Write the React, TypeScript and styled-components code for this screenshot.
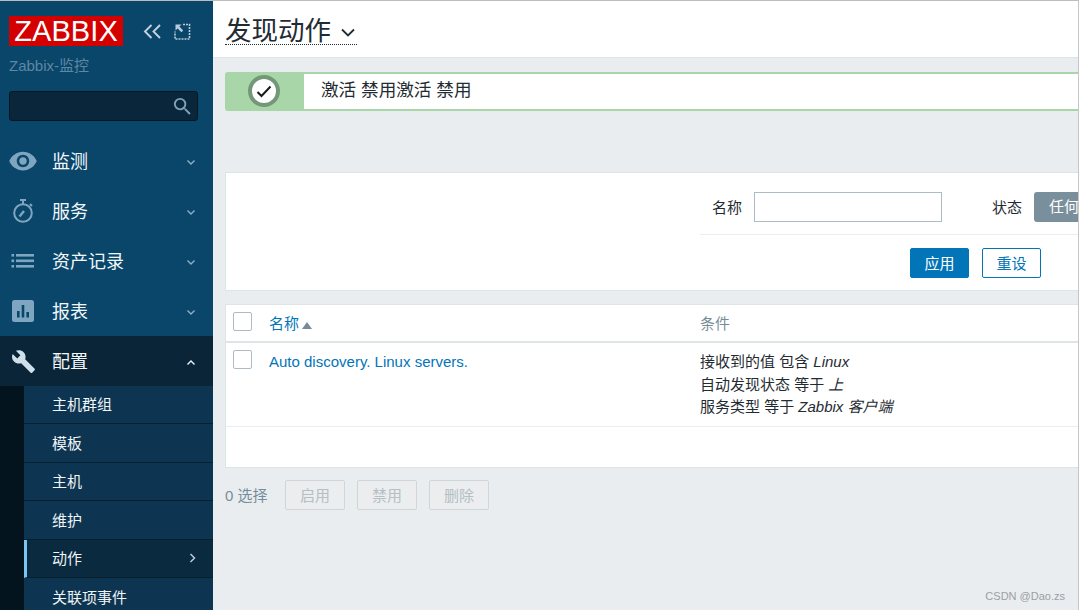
import React from "react";
import styled, { createGlobalStyle } from "styled-components";
import { MdBuild, MdSearch, MdVisibility } from "react-icons/md";

const GlobalStyle = createGlobalStyle`
  html, body {
    margin: 0;
    padding: 0;
    background: #fff;
  }
  body {
    font-family: "Liberation Sans", "Noto Sans CJK SC", sans-serif;
  }
  * {
    box-sizing: border-box;
  }
`;

const Page = styled.div`
  position: relative;
  display: flex;
  width: 1079px;
  height: 610px;
  overflow: hidden;
  border-top: 1px solid #bdbdbd;
  border-right: 1px solid #c4c6c8;
`;

const Sidebar = styled.aside`
  flex: 0 0 213px;
  display: flex;
  flex-direction: column;
  background: #0a466a;
`;

const LogoRow = styled.div`
  display: flex;
  flex: none;
  align-items: center;
  padding: 15px 0 0 9px;
  height: 45px;
`;

const Logo = styled.div`
  width: 114px;
  height: 30px;
  background: #d40000;
  color: #fff;
  font-size: 29px;
  line-height: 30px;
  text-align: center;
  letter-spacing: 0.1px;
`;

const LogoIcons = styled.div`
  display: flex;
  align-items: center;
  gap: 12px;
  margin-left: 20px;
`;

const HostName = styled.div`
  flex: none;
  margin: 11px 0 0 9px;
  font-size: 15px;
  line-height: 18px;
  color: #5d88a4;
`;

const SearchBox = styled.div`
  display: flex;
  flex: none;
  align-items: center;
  justify-content: flex-end;
  width: 189px;
  height: 30px;
  margin: 16px 0 15px 9px;
  padding-right: 3px;
  background: #09263a;
  border: 1px solid #041824;
  border-radius: 3px;
  color: #7fa2b8;
  font-size: 23px;
`;

const TopItem = styled.div<{ $open?: boolean }>`
  display: flex;
  align-items: center;
  height: 50px;
  flex: none;
  background: ${(p) => (p.$open ? "#0a2537" : "transparent")};
  color: #f2f7fa;
  font-size: 18px;
`;

const IconSlot = styled.span<{ $open?: boolean }>`
  display: flex;
  align-items: center;
  justify-content: center;
  flex: 0 0 46px;
  color: ${(p) => (p.$open ? "#cfe0ea" : "#7fa6c0")};
`;

const ItemLabel = styled.span`
  flex: 1;
  margin-left: 6px;
  padding-bottom: 2px;
`;

const ItemArrow = styled.svg`
  margin: 2px 17px 0 0;
`;

const SubNav = styled.div`
  flex: 1;
  border-left: 24px solid #04141e;
  background: #0d3450;
`;

const SubItem = styled.div<{ $active?: boolean; $h: number }>`
  display: flex;
  align-items: center;
  justify-content: space-between;
  height: ${(p) => p.$h}px;
  padding-left: ${(p) => (p.$active ? 25 : 28)}px;
  padding-right: 17px;
  padding-bottom: 2px;
  border-bottom: 1px solid #06202f;
  border-left: ${(p) => (p.$active ? "3px solid #7bc5f5" : "none")};
  background: ${(p) => (p.$active ? "#0a2a40" : "transparent")};
  color: #f0f5f8;
  font-size: 15px;
`;

const Main = styled.main`
  flex: 1;
  min-width: 0;
  display: flex;
  flex-direction: column;
  background: #e9edf0;
  overflow: hidden;
`;

const Header = styled.header`
  height: 57px;
  flex: none;
  padding: 13px 0 0 12px;
  background: #fff;
  border-bottom: 1px solid #dfe4e7;
`;

const PageTitle = styled.h1`
  display: inline-flex;
  align-items: center;
  gap: 10px;
  margin: 0;
  height: 31px;
  padding: 3px 2px 0 0;
  font-size: 26.5px;
  line-height: 28px;
  font-weight: 400;
  color: #1f2c33;
  border-bottom: 1px dotted #1f2c33;
`;

const Message = styled.div`
  display: flex;
  flex: none;
  height: 39px;
  margin: 14px 0 0 12px;
  border: 2px solid #a8d6a8;
  border-right: none;
  border-radius: 3px 0 0 3px;
  background: #fff;
`;

const MessageIcon = styled.div`
  flex: 0 0 77px;
  display: flex;
  align-items: center;
  justify-content: center;
  padding: 0 3px 1px 0;
  background: #a8d6a8;
`;

const CheckRing = styled.div`
  display: flex;
  align-items: center;
  justify-content: center;
  width: 32px;
  height: 32px;
  border: 4px solid #749777;
  border-radius: 50%;
  background: #fff;
`;

const MessageText = styled.div`
  padding-left: 17px;
  font-size: 17.6px;
  line-height: 32px;
  color: #1f2c33;
`;

const FilterCard = styled.section`
  display: flex;
  flex-direction: column;
  height: 119px;
  margin: 61px 0 0 12px;
  width: 900px;
  flex: none;
  padding: 19px 0 0 474px;
  background: #fff;
  border: 1px solid #dfe4e7;
`;

const FilterRow = styled.div`
  display: flex;
  align-items: center;
  height: 43px;
  padding: 0 0 12px 12px;
  border-bottom: 1px solid #ebeef0;
`;

const FieldLabel = styled.label`
  margin-top: -2px;
  font-size: 15px;
  color: #1f2c33;
`;

const TextInput = styled.div`
  width: 188px;
  height: 30px;
  margin: 0 50px 0 12px;
  border: 1px solid #acbbc4;
  background: #fff;
`;

const Segment = styled.div`
  width: 70px;
  height: 30px;
  margin-left: 12px;
  padding-left: 15px;
  border-radius: 3px 0 0 3px;
  background: #7a8f9c;
  color: #fff;
  font-size: 15px;
  line-height: 29px;
`;

const FilterActions = styled.div`
  display: flex;
  gap: 13px;
  padding: 13px 0 0 210px;
`;

const Button = styled.button<{ $primary?: boolean }>`
  width: 59px;
  height: 30px;
  padding: 0 0 2px;
  border: 1px solid #0275b8;
  border-radius: 2px;
  background: ${(p) => (p.$primary ? "#0275b8" : "#fff")};
  color: ${(p) => (p.$primary ? "#fff" : "#0275b8")};
  font-family: inherit;
  font-size: 15px;
`;

const TableCard = styled.section`
  width: 900px;
  height: 164px;
  flex: none;
  margin: 13px 0 0 12px;
  background: #fff;
  border: 1px solid #dfe4e7;
`;

const TableRow = styled.div<{ $head?: boolean }>`
  display: grid;
  grid-template-columns: 36px 431px 1fr;
  align-items: start;
  height: ${(p) => (p.$head ? 38 : 84)}px;
  padding: 7px 0 0 7px;
  border-bottom: ${(p) => (p.$head ? "2px solid #dfe4e7" : "1px solid #ebeef0")};
`;

const CheckBox = styled.span`
  display: block;
  width: 19px;
  height: 19px;
  border: 1px solid #acbbc4;
  border-radius: 2px;
  background: #fff;
`;

const NameLink = styled.a`
  padding-top: 2px;
  font-size: 15px;
  line-height: 20px;
  color: #0275b8;
`;

const SortMark = styled.span`
  display: inline-block;
  width: 0;
  height: 0;
  margin-left: 3px;
  border-left: 5px solid transparent;
  border-right: 5px solid transparent;
  border-bottom: 7px solid #768d99;
`;

const HeadCell = styled.div`
  padding-top: 2px;
  font-size: 15px;
  line-height: 20px;
  color: #768d99;
`;

const Conditions = styled.div`
  padding-top: 1px;
  font-size: 15px;
  line-height: 22.5px;
  color: #1f2c33;

  em {
    font-style: italic;
  }
`;

const Footer = styled.div`
  display: flex;
  align-items: center;
  gap: 12px;
  margin: 12px 0 0 12px;
  color: #768d99;
  font-size: 15px;
`;

const SelectedCount = styled.span`
  width: 48px;
  padding-bottom: 2px;
`;

const DisabledButton = styled.button`
  width: 60px;
  height: 30px;
  padding: 0 0 2px;
  border: 1px solid #cfd6da;
  border-radius: 2px;
  background: #ebedee;
  color: #b4bfc6;
  font-family: inherit;
  font-size: 15px;
`;

const Watermark = styled.div`
  position: absolute;
  right: 13px;
  bottom: 8px;
  font-size: 11px;
  color: #9a9fa3;
`;

const Chevron = ({ up }: { up?: boolean }) => (
  <ItemArrow width="10" height="7" viewBox="0 0 10 7" fill="none" stroke={up ? "#eef4f8" : "#8fb0c6"} strokeWidth="1.4">
    <path d={up ? "M1.5 5.5 5 2l3.5 3.5" : "M1.5 1.5 5 5l3.5-3.5"} />
  </ItemArrow>
);

const CollapseIcon = () => (
  <svg width="19" height="15" viewBox="0 0 19 15" fill="none" stroke="#c3d2dd" strokeWidth="1.9">
    <path d="M8.5 1 2 7.5 8.5 14M17 1 10.5 7.5 17 14" />
  </svg>
);

const ExpandIcon = () => (
  <svg width="17" height="17" viewBox="0 0 17 17" fill="none" stroke="#b9cbd8">
    <path d="M9 1.5h6.5V16H1V8.5" strokeWidth="1.6" strokeDasharray="2 1" />
    <path d="M1.5 1.5h6L5.4 3.6l3.8 3.8-1.8 1.8-3.8-3.8L1.5 7.5z" fill="#b9cbd8" stroke="none" />
  </svg>
);

const TimerIcon = () => (
  <svg width="24" height="26" viewBox="0 0 24 26" fill="none" stroke="#7fa6c0" strokeWidth="2">
    <circle cx="12" cy="15" r="8.8" />
    <path d="M9 2h6M12 2v4M19 6l2 2" />
    <path d="M8.5 18.5 13 13" strokeWidth="2.4" />
  </svg>
);

const ListIcon = () => (
  <svg width="24" height="16" viewBox="0 0 24 16" fill="#7fa6c0">
    <rect x="0.5" y="1" width="2.6" height="2.6" />
    <rect x="0.5" y="6.5" width="2.6" height="2.6" />
    <rect x="0.5" y="12" width="2.6" height="2.6" />
    <rect x="5" y="1" width="18" height="2.6" />
    <rect x="5" y="6.5" width="18" height="2.6" />
    <rect x="5" y="12" width="18" height="2.6" />
  </svg>
);

const ReportIcon = () => (
  <svg width="24" height="24" viewBox="0 0 24 24">
    <rect x="1" y="1" width="22" height="22" rx="2.5" fill="#7fa6c0" />
    <rect x="6" y="12" width="2.6" height="6.5" fill="#0a466a" />
    <rect x="10.7" y="6" width="2.6" height="12.5" fill="#0a466a" />
    <rect x="15.4" y="13" width="2.6" height="5.5" fill="#0a466a" />
  </svg>
);

const TitleArrow = () => (
  <svg width="14" height="9" viewBox="0 0 14 9" fill="none" stroke="#1f2c33" strokeWidth="1.8" style={{ marginTop: 3 }}>
    <path d="M1 1.5 7 7.5l6-6" />
  </svg>
);

const CheckMark = () => (
  <svg width="16" height="13" viewBox="0 0 16 13" fill="none" stroke="#1a1a1a" strokeWidth="2">
    <path d="M1.5 7 5.5 11 14.5 1.5" />
  </svg>
);

const menu = [
  { label: "监测", icon: <MdVisibility size={30} /> },
  { label: "服务", icon: <TimerIcon /> },
  { label: "资产记录", icon: <ListIcon /> },
  { label: "报表", icon: <ReportIcon /> },
];

const subItems = [
  { label: "主机群组", h: 38 },
  { label: "模板", h: 39 },
  { label: "主机", h: 38 },
  { label: "维护", h: 39 },
  { label: "动作", h: 38, active: true },
  { label: "关联项事件", h: 39 },
];

const App = () => (
  <>
    <GlobalStyle />
    <Page>
      <Sidebar>
        <LogoRow>
          <Logo>ZABBIX</Logo>
          <LogoIcons>
            <CollapseIcon />
            <ExpandIcon />
          </LogoIcons>
        </LogoRow>
        <HostName>Zabbix-监控</HostName>
        <SearchBox>
          <MdSearch />
        </SearchBox>
        {menu.map((item) => (
          <TopItem key={item.label}>
            <IconSlot>{item.icon}</IconSlot>
            <ItemLabel>{item.label}</ItemLabel>
            <Chevron />
          </TopItem>
        ))}
        <TopItem $open>
          <IconSlot $open>
            <MdBuild size={25} />
          </IconSlot>
          <ItemLabel>配置</ItemLabel>
          <Chevron up />
        </TopItem>
        <SubNav>
          {subItems.map((item) => (
            <SubItem key={item.label} $h={item.h} $active={item.active}>
              {item.label}
              {item.active && (
                <svg width="7" height="10" viewBox="0 0 7 10" fill="none" stroke="#b9cbd8" strokeWidth="1.5">
                  <path d="M1.5 1 5.5 5l-4 4" />
                </svg>
              )}
            </SubItem>
          ))}
        </SubNav>
      </Sidebar>
      <Main>
        <Header>
          <PageTitle>
            发现动作
            <TitleArrow />
          </PageTitle>
        </Header>
        <Message>
          <MessageIcon>
            <CheckRing>
              <CheckMark />
            </CheckRing>
          </MessageIcon>
          <MessageText>激活 禁用激活 禁用</MessageText>
        </Message>
        <FilterCard>
          <FilterRow>
            <FieldLabel>名称</FieldLabel>
            <TextInput />
            <FieldLabel>状态</FieldLabel>
            <Segment>任何</Segment>
          </FilterRow>
          <FilterActions>
            <Button $primary>应用</Button>
            <Button>重设</Button>
          </FilterActions>
        </FilterCard>
        <TableCard>
          <TableRow $head>
            <CheckBox />
            <NameLink>
              名称
              <SortMark />
            </NameLink>
            <HeadCell>条件</HeadCell>
          </TableRow>
          <TableRow>
            <CheckBox />
            <NameLink>Auto discovery. Linux servers.</NameLink>
            <Conditions>
              接收到的值 包含 <em>Linux</em>
              <br />
              自动发现状态 等于 <em>上</em>
              <br />
              服务类型 等于 <em>Zabbix 客户端</em>
            </Conditions>
          </TableRow>
        </TableCard>
        <Footer>
          <SelectedCount>0 选择</SelectedCount>
          <DisabledButton disabled>启用</DisabledButton>
          <DisabledButton disabled>禁用</DisabledButton>
          <DisabledButton disabled>删除</DisabledButton>
        </Footer>
      </Main>
      <Watermark>CSDN @Dao.zs</Watermark>
    </Page>
  </>
);

export default App;
